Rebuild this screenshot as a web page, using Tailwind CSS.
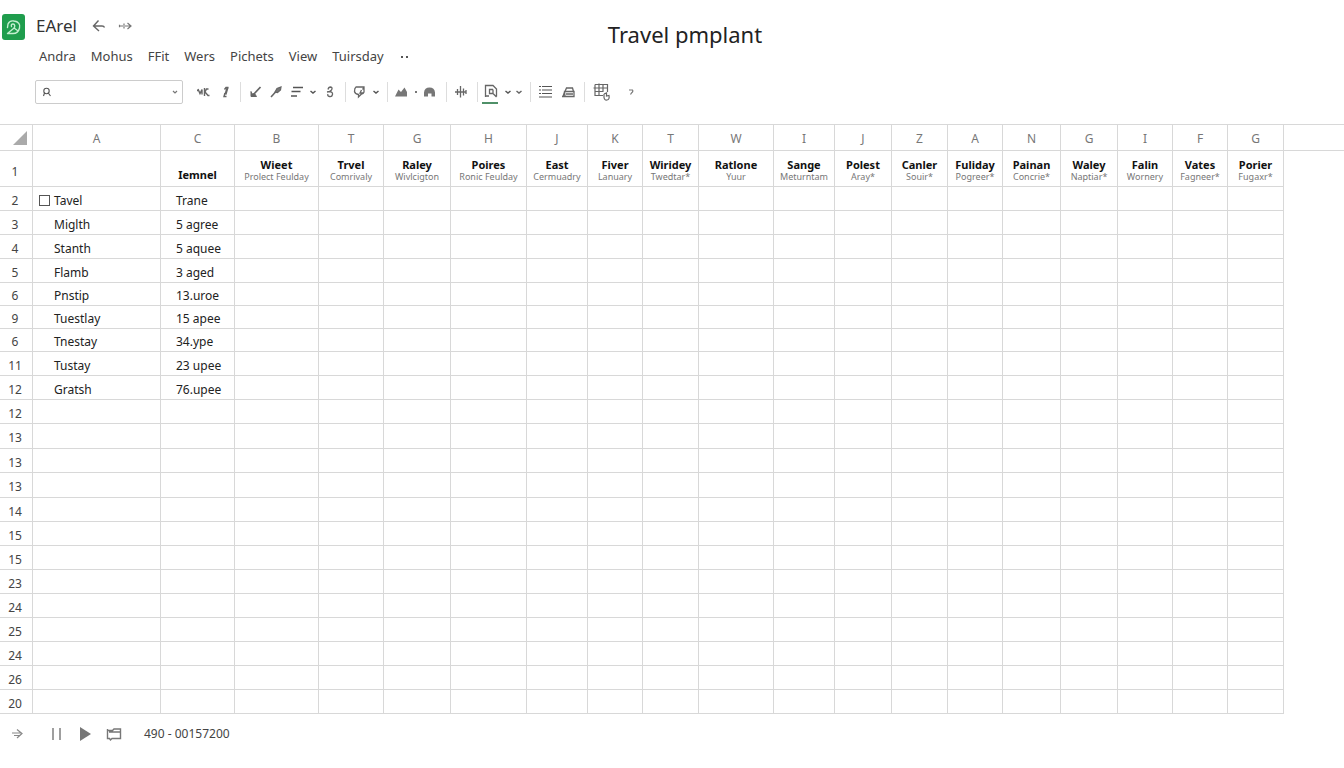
<!DOCTYPE html>
<html lang="en">
<head>
    <meta charset="UTF-8">
    <meta name="viewport" content="width=device-width, initial-scale=1.0">
    <title>Travel pmplant</title>
    <script src="https://cdn.jsdelivr.net/npm/@tailwindcss/browser@4"></script>
</head>
<body class="min-h-screen bg-white font-['Noto_Sans',sans-serif] text-[#333]">
    <!-- Header -->
    <header class="flex gap-[11px] pl-0.5 pr-2.5">
        <a href="#" aria-label="Home" class="mt-3.5 h-[26px] w-[23px] shrink-0">
            <svg viewBox="0 0 23 26" class="h-full w-full" fill="none" stroke="#c4efd0" stroke-width="1.4" stroke-linecap="round" stroke-linejoin="round">
                <rect width="23" height="26" rx="3" fill="#1f9d4d" stroke="none"/>
                <path d="M6 10C7 7.500 9.500 6.500 12 7C16.500 7.500 18.500 10.500 17.500 14C16.800 17 14.500 19.500 11 19.500H5.500L11.500 14.500C13.500 12.800 13 10 11 10C9.500 10 9 11 9.500 12.500M6 10L5.500 13.500M12 14L15.500 16.500"/>
            </svg>
        </a>
        <div class="grid flex-1 grid-cols-[1fr_auto_1fr]">
            <div class="pt-3">
                <div class="flex h-7 items-center">
                    <span class="text-[17px] leading-7">EArel</span>
                    <button type="button" aria-label="Undo" class="ml-3.5">
                        <svg viewBox="0 0 16 16" class="h-4 w-4" fill="none" stroke="#666" stroke-width="1.4"><path d="M7.500 2.500L2.500 8L8 13M2.500 8H11Q13 8 13.500 9.500"/></svg>
                    </button>
                    <button type="button" aria-label="Redo" class="ml-2.5">
                        <svg viewBox="0 0 16 16" class="h-4 w-4" fill="none" stroke="#777" stroke-width="1.2"><path d="M2 8H14M10.500 5L14 8L10.500 11M2.500 6.800V9.200M7 5.500V7M7 9V10.500"/></svg>
                    </button>
                </div>
                <nav class="mt-[5px] flex h-6 items-center gap-[15px] pl-[3px] text-[13px] text-[#444]">
                    <button type="button">Andra</button>
                    <button type="button">Mohus</button>
                    <button type="button">FFit</button>
                    <button type="button">Wers</button>
                    <button type="button">Pichets</button>
                    <button type="button">View</button>
                    <button type="button">Tuirsday</button>
                    <button type="button" aria-label="More" class="flex gap-[3px] pl-0.5">
                        <span class="h-0.5 w-0.5 bg-[#555]"></span>
                        <span class="h-0.5 w-0.5 bg-[#555]"></span>
                    </button>
                </nav>
            </div>
            <h1 class="pt-[18px] text-[22px] leading-8 text-[#222]">Travel pmplant</h1>
        </div>
    </header>

    <!-- Toolbar -->
    <div class="flex items-center pt-[11px] pb-5 pl-[35px]" role="toolbar" aria-label="Formatting">
        <label class="flex h-6 w-[148px] items-center rounded-xs border border-[#ccc] pl-1.5 pr-1">
            <svg viewBox="0 0 10 10" class="h-2.5 w-2.5" fill="none" stroke="#555" stroke-width="1.1"><circle cx="4.500" cy="4" r="2.700"/><path d="M2.500 6L1.500 9M6.300 6L8.500 9"/></svg>
            <input type="text" aria-label="Search" class="min-w-0 flex-1 px-1 text-xs outline-none">
            <svg viewBox="0 0 6 6" class="h-1.5 w-1.5" fill="none" stroke="#777" stroke-width="1.200"><path d="M1 2L3 4L5 2"/></svg>
        </label>

        <div class="ml-3 flex h-5 items-center gap-[5px] pr-2">
            <button type="button" aria-label="Strikethrough"><svg viewBox="0 0 16 16" class="h-4 w-4" fill="none" stroke="#666" stroke-width="1.400"><path d="M3 5L5 9.500L7 5.500V10.500M9.500 4V12M13.500 5H11.500L10 8L13 11.500H14.500M2 6.500H4"/></svg></button>
            <button type="button" aria-label="Italic"><svg viewBox="0 0 16 16" class="h-4 w-4" fill="none" stroke="#666" stroke-width="1.400"><path d="M12.500 3.500H10L8.500 5.500M9 9L8 12.500H10.500"/><path d="M11.500 3.500L9.500 10.500" stroke-width="2.200"/></svg></button>
        </div>
        <div class="flex h-5 items-center gap-[5px] border-l border-[#ddd] pl-1.5 pr-2">
            <button type="button" aria-label="Brush"><svg viewBox="0 0 16 16" class="h-4 w-4" fill="none" stroke="#666" stroke-width="1.700"><path d="M13.500 3L7 10"/><path d="M4 7.500V12.500H9.500L7.500 9.500L5 10Z" fill="#666" stroke-width="1"/></svg></button>
            <button type="button" aria-label="Pen"><svg viewBox="0 0 16 16" class="h-4 w-4" fill="none" stroke="#666" stroke-width="1.600"><path d="M3 13L8 7.500"/><path d="M7 8L9 4.500L13 3L12.500 6L9.500 8.500Z" fill="#777" stroke-width="1.200"/></svg></button>
            <button type="button" aria-label="Align"><svg viewBox="0 0 16 16" class="h-4 w-4" fill="none" stroke="#555" stroke-width="1.400"><path d="M4 3.500H14M2.500 7.500H11.500M2 12H8"/></svg></button>
            <button type="button" aria-label="Align options"><svg viewBox="0 0 6 6" class="h-1.5 w-1.5" fill="none" stroke="#555" stroke-width="1.500"><path d="M.5 2L3 4L5.500 2"/></svg></button>
            <button type="button" aria-label="Link"><svg viewBox="0 0 16 16" class="h-4 w-4" fill="none" stroke="#666" stroke-width="1.300"><path d="M7 5.500Q7.500 3 9.500 3Q12 3.500 10.500 6L8.500 7.500M6 8L8.500 7.500Q12 8 11.500 10.500Q11 13 8.500 12.500Q6 12 7 10"/></svg></button>
        </div>
        <div class="flex h-5 items-center gap-[5px] border-l border-[#ddd] pl-1.5 pr-2">
            <button type="button" aria-label="Comment"><svg viewBox="0 0 16 16" class="h-4 w-4" fill="none" stroke="#666" stroke-width="1.300"><path d="M4 3H12V8Q11.500 10 9.500 10L6.500 13V10.500Q3 10 2.500 7.500Q2.500 4 4 3ZM9.500 6L8 9H11.500M12 3L10.500 5.500"/></svg></button>
            <button type="button" aria-label="Comment options"><svg viewBox="0 0 6 6" class="h-1.5 w-1.5" fill="none" stroke="#555" stroke-width="1.500"><path d="M.5 2L3 4L5.500 2"/></svg></button>
        </div>
        <div class="flex h-5 items-center gap-[5px] border-l border-[#ddd] pl-1.5 pr-2">
            <button type="button" aria-label="Chart"><svg viewBox="0 0 16 16" class="h-4 w-4" fill="#777"><path d="M1 12.500L4.500 5.500L7 8L10.500 3.500L13 8V12.500Z"/></svg></button>
            <span class="h-0.5 w-0.5 bg-[#777]"></span>
            <button type="button" aria-label="Shape"><svg viewBox="0 0 16 16" class="h-4 w-4" fill="#777"><path d="M2 12.500V8.500Q2.500 3.500 7.500 3.500Q12.500 3.500 13 8.500V12.500H9.500V9.500H6V12.500Z"/></svg></button>
        </div>
        <div class="flex h-5 items-center border-l border-[#ddd] pl-1.5 pr-2">
            <button type="button" aria-label="Resize columns"><svg viewBox="0 0 16 16" class="h-4 w-4" fill="none" stroke="#666" stroke-width="1.300"><path d="M2 8H13M4.500 5V11M7.500 2V13.500M10.500 4.500V11.500M13 6V10"/></svg></button>
        </div>
        <div class="flex h-5 items-center gap-[5px] border-l border-[#ddd] pl-1.5 pr-2">
            <button type="button" aria-label="Find in sheet" class="relative">
                <svg viewBox="0 0 16 16" class="h-4 w-4" fill="none" stroke="#666" stroke-width="1.300"><path d="M1.500 13V1.500H9L12.500 5V12.500M1.500 12H5M9 5.500H5.500V9.500H9V5.500M8.500 9L12.500 13"/></svg>
                <span class="absolute -bottom-1 -left-0.5 h-0.5 w-4 bg-[#4f9068]"></span>
            </button>
            <button type="button" aria-label="Find options"><svg viewBox="0 0 6 6" class="h-1.5 w-1.5" fill="none" stroke="#555" stroke-width="1.500"><path d="M.5 2L3 4L5.500 2"/></svg></button>
            <button type="button" aria-label="More options"><svg viewBox="0 0 6 6" class="h-1.5 w-1.5" fill="none" stroke="#666" stroke-width="1.500"><path d="M.5 2L3 4L5.500 2"/></svg></button>
        </div>
        <div class="flex h-5 items-center gap-[7px] border-l border-[#ddd] pl-1.5 pr-2">
            <button type="button" aria-label="List"><svg viewBox="0 0 16 16" class="h-4 w-4" fill="none" stroke="#555" stroke-width="1.200"><path d="M2 2.500H4M5 2.500H15M2 6H4M5 6H15M2 9.500H4M5 9.500H15M2 13H15"/></svg></button>
            <button type="button" aria-label="Print"><svg viewBox="0 0 16 16" class="h-4 w-4" fill="none" stroke="#666" stroke-width="1.300"><path d="M5 7.500L6.500 4H12.500L13.500 7.500M4.500 7.500H14V12.500H5ZM6 10H13M2 12.500H14M4.500 8L3 12.500"/></svg></button>
        </div>
        <div class="flex h-5 items-center gap-[5px] border-l border-[#ddd] pl-1.5">
            <button type="button" aria-label="Select table"><svg viewBox="0 0 20 20" class="h-5 w-5" fill="none" stroke="#666" stroke-width="1.200"><path d="M4 2.500H16.500V10M4 2.500V13.500H12M2.500 6H16.500M4 9.500H12.500M8 1.500V13.500M12 2.500V9.500"/><path d="M13 12V15.500Q13.500 18.500 16 18Q18.800 17.500 18 13.500L15.500 14V11L13 12"/></svg></button>
            <button type="button" aria-label="Help" class="ml-3"><svg viewBox="0 0 6 6" class="h-1.5 w-1.5" fill="none" stroke="#777" stroke-width="1.200"><path d="M1 1H4.500Q5.500 2.500 3.500 4L2.500 5.500"/></svg></button>
        </div>
    </div>

    <!-- Sheet -->
    <main class="overflow-x-auto">
        <table class="w-full table-fixed border-separate border-spacing-0 border-t border-[#d8d8d8] text-[12px] leading-4">
            <colgroup id="cols"></colgroup>
            <thead>
                <tr id="letters" class="h-[26px]">
                    <th class="border-r border-b border-[#d8d8d8] pr-[5px]" aria-label="Select all">
                        <svg viewBox="0 0 14 14" class="ml-auto h-3.5 w-3.5" fill="#aaa"><path d="M14 0V14H0Z"/></svg>
                    </th>
                </tr>
            </thead>
            <tbody id="rows"></tbody>
        </table>
    </main>

    <!-- Bottom bar -->
    <footer class="flex h-10 items-center gap-[13px] pl-[9px]">
        <button type="button" aria-label="Next sheet" class="mr-2.5"><svg viewBox="0 0 16 16" class="h-4 w-4" fill="none" stroke="#888" stroke-width="1.200"><path d="M3 7H12.500M8 3.500L13 7.500L8 12M5 9.500H11"/></svg></button>
        <button type="button" aria-label="Pause"><svg viewBox="0 0 16 16" class="h-4 w-4" fill="none" stroke="#888" stroke-width="1.600"><path d="M5 2V14M12 2V14"/></svg></button>
        <button type="button" aria-label="Play"><svg viewBox="0 0 16 16" class="h-4 w-4" fill="#777"><path d="M3 1L14 8L3 15Z"/></svg></button>
        <button type="button" aria-label="Sheets"><svg viewBox="0 0 16 16" class="h-4 w-4" fill="none" stroke="#777" stroke-width="1.400"><path d="M1.500 3V12.500H3.500L4.500 14L6 12.500H14.500V3H8L6.500 4.500H2M3 6H14.500"/></svg></button>
        <span class="ml-[9px] text-[12px] text-[#444]">490 - 00157200</span>
    </footer>

    <script>
        // letter, width, heading, sub heading
        const columns = [
            ['A', 128, '', ''],
            ['C', 74, 'Iemnel', ''],
            ['B', 84, 'Wieet', 'Prolect Feulday'],
            ['T', 65, 'Trvel', 'Comrivaly'],
            ['G', 67, 'Raley', 'Wivlcigton'],
            ['H', 76, 'Poires', 'Ronic Feulday'],
            ['J', 61, 'East', 'Cermuadry'],
            ['K', 55, 'Fiver', 'Lanuary'],
            ['T', 56, 'Wiridey', 'Twedtar*'],
            ['W', 75, 'Ratlone', 'Yuur'],
            ['I', 61, 'Sange', 'Meturntam'],
            ['J', 57, 'Polest', 'Aray*'],
            ['Z', 56, 'Canler', 'Souir*'],
            ['A', 55, 'Fuliday', 'Pogreer*'],
            ['N', 58, 'Painan', 'Concrie*'],
            ['G', 57, 'Waley', 'Naptiar*'],
            ['I', 55, 'Falin', 'Wornery'],
            ['F', 55, 'Vates', 'Fagneer*'],
            ['G', 56, 'Porier', 'Fugaxr*'],
        ];

        // row label, height, first cell, second cell
        const rows = [
            ['2', 24, 'Tavel', 'Trane'],
            ['3', 24, 'Miglth', '5 agree'],
            ['4', 24, 'Stanth', '5 aquee'],
            ['5', 24, 'Flamb', '3 aged'],
            ['6', 23, 'Pnstip', '13.uroe'],
            ['9', 23, 'Tuestlay', '15 apee'],
            ['6', 23, 'Tnestay', '34.ype'],
            ['11', 24, 'Tustay', '23 upee'],
            ['12', 24, 'Gratsh', '76.upee'],
            ['12', 24], ['13', 25], ['13', 24], ['13', 25], ['14', 24], ['15', 24], ['15', 24],
            ['23', 24], ['24', 24], ['25', 24], ['24', 24], ['26', 24], ['20', 24],
        ];

        const cell = 'border-r border-b border-[#d8d8d8]';
        let cols = '<col style="width:33px">';
        let letters = '';
        let headings = `<th class="${cell} pr-0.5 pt-1.5 font-normal text-[#444]">1</th>`;

        columns.forEach(([letter, width, title, sub]) => {
            cols += `<col style="width:${width}px">`;
            letters += `<th class="${cell} pt-0.5 font-normal text-[#777]">${letter}</th>`;
            if (title && !sub) {
                headings += `<th class="${cell} pb-[3px] align-bottom text-[11px] font-bold text-[#111]">${title}</th>`;
            } else {
                headings += `<th class="${cell} whitespace-nowrap pt-2 align-top font-normal">
                    <div class="text-[11px] leading-3 font-bold text-[#111]">${title}</div>
                    <div class="text-[9px] leading-3 text-[#777]">${sub}</div>
                </th>`;
            }
        });

        document.getElementById('cols').innerHTML = cols + '<col>';
        document.getElementById('letters').insertAdjacentHTML('beforeend', letters + '<th class="border-b border-[#d8d8d8]"></th>');

        let body = `<tr class="h-9">${headings}<td></td></tr>`;
        rows.forEach(([label, height, first = '', second = ''], i) => {
            const box = '<input type="checkbox" id="pick" class="h-[11px] w-[11px] appearance-none border border-[#555]">';
            const name = i === 0
                ? `<div class="flex items-center gap-1">${box}<label for="pick">${first}</label></div>`
                : first;
            body += `<tr style="height:${height}px">
                <th class="${cell} pr-0.5 pt-1 font-normal text-[#444]">${label}</th>
                <td class="${cell} ${i === 0 ? 'pl-1.5' : 'pl-[21px]'} pt-1 text-[#222]">${name}</td>
                <td class="${cell} pl-[15px] pt-1 text-[#222]">${second}</td>
                ${`<td class="${cell}"></td>`.repeat(columns.length - 2)}
                <td></td>
            </tr>`;
        });
        document.getElementById('rows').innerHTML = body;
    </script>
</body>
</html>
